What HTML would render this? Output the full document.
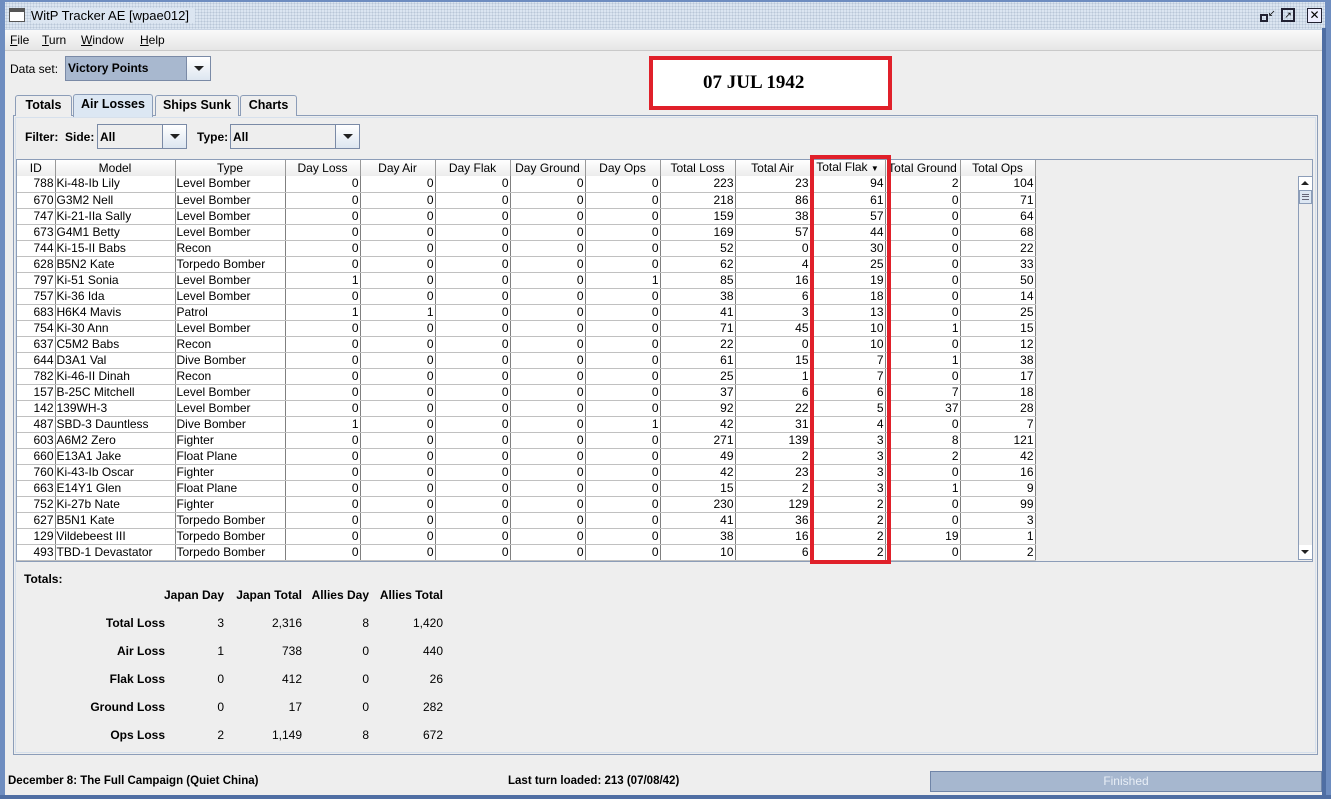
<!DOCTYPE html>
<html><head><meta charset="utf-8">
<style>
*{box-sizing:border-box;margin:0;padding:0}
body{width:1331px;height:799px;overflow:hidden;background:#6e8dc0;font-family:"Liberation Sans",sans-serif;font-size:12px;color:#000;position:relative}
.abs{position:absolute}
#win{left:5px;top:2px;width:1320px;height:795px;background:#eeeeee}
#title{left:0;top:0;width:1320px;height:28px;background:#dbe5f1;border-bottom:1px solid #c8d4e4;
background-image:radial-gradient(#b9c6d8 0.8px,transparent 0.9px);background-size:3px 3px}
#menu{left:0;top:28px;width:1320px;height:21px;background:linear-gradient(#fafafa,#e6e6e6);border-bottom:1px solid #c9c9c9}
.u{text-decoration:underline}
.cmb{border:1px solid #7a8aa6;background:#eeeeee;height:25px}
.arrbtn{position:absolute;right:0;top:0;width:24px;height:23px;border-left:1px solid #7a8aa6;background:linear-gradient(#fff,#dde6f0)}
.arrbtn:after{content:"";position:absolute;left:7px;top:9px;border-left:5px solid transparent;border-right:5px solid transparent;border-top:5px solid #222}
.tab{position:absolute;top:95px;height:21px;border:1px solid #8c9db8;border-bottom:none;border-radius:3px 3px 0 0;background:#eeeeee;font-weight:bold;font-size:12.5px;text-align:center;line-height:19px}
table{border-collapse:collapse;table-layout:fixed}
#tbl td{height:16px;border-right:1px solid #808080;border-bottom:1px solid #c0c0c0;padding:0 1px;white-space:nowrap;overflow:hidden;line-height:15px;background:#fff}
#tbl td.r{text-align:right}
#hdr td{height:16px;border-right:1px solid #999;border-bottom:1px solid #999;text-align:center;background:linear-gradient(#fff,#ececec);line-height:15px;white-space:nowrap;overflow:hidden}
.tl{position:absolute;font-weight:bold;text-align:right}
</style></head><body>
<div id="win" class="abs">
 <div id="title" class="abs">
  <div class="abs" style="left:4px;top:6px;width:16px;height:14px;border:1px solid #555;background:#fff"><div style="height:3px;background:#555"></div></div>
  <div class="abs" style="left:26px;top:6px;font-size:13px;background:#dbe5f1;padding-right:6px">WitP Tracker AE [wpae012]</div>
  <div class="abs" style="left:1255px;top:7px;width:14px;height:14px;"><div class="abs" style="left:0;top:5px;width:8px;height:8px;border:2px solid #223"></div><div class="abs" style="left:8px;top:0;font-size:9px;line-height:8px">↙</div></div>
  <div class="abs" style="left:1276px;top:6px;width:14px;height:14px;border:2px solid #223;font-size:9px;line-height:10px;text-align:center">↗</div>
  <div class="abs" style="left:1302px;top:6px;width:15px;height:15px;border:1px solid #223;background:#eef;font-size:12px;line-height:13px;text-align:center">✕</div>
 </div>
 <div id="menu" class="abs">
  <span class="abs" style="left:5px;top:3px"><span class="u">F</span>ile</span>
  <span class="abs" style="left:37px;top:3px"><span class="u">T</span>urn</span>
  <span class="abs" style="left:76px;top:3px"><span class="u">W</span>indow</span>
  <span class="abs" style="left:135px;top:3px"><span class="u">H</span>elp</span>
 </div>
</div>
<div class="abs" style="left:1322px;top:28px;width:4px;height:770px;background:#4f6ea3"></div>
<div class="abs" style="left:10px;top:62px">Data set:</div>
<div class="abs cmb" style="left:65px;top:56px;width:146px;">
 <div class="abs" style="left:0;top:0;width:120px;height:23px;background:#a8b8cf;padding:4px 2px;font-weight:bold">Victory Points</div>
 <div class="arrbtn"></div>
</div>
<div class="abs" style="left:649px;top:56px;width:243px;height:54px;border:4px solid #e0202a;background:#fff;font-family:'Liberation Serif',serif;font-weight:bold;font-size:19px;padding:12px 0 0 50px">07 JUL 1942</div>

<div class="abs" style="left:13px;top:115px;width:1305px;height:640px;border:1px solid #8c9db8;background:#eeeeee"></div>
<div class="abs" style="left:15px;top:117px;width:1301px;height:636px;border:1px solid #d6e0ec"></div>
<div class="tab" style="left:15px;width:57px">Totals</div>
<div class="tab" style="left:73px;width:80px;background:#dce7f3;top:94px;height:23px">Air Losses</div>
<div class="tab" style="left:155px;width:84px">Ships Sunk</div>
<div class="tab" style="left:240px;width:57px">Charts</div>

<div class="abs" style="left:25px;top:130px;font-weight:bold">Filter:&nbsp;&nbsp;Side:</div>
<div class="abs cmb" style="left:97px;top:124px;width:90px"><div style="padding:5px 2px;font-weight:bold">All</div><div class="arrbtn"></div></div>
<div class="abs" style="left:197px;top:130px;font-weight:bold">Type:</div>
<div class="abs cmb" style="left:230px;top:124px;width:130px"><div style="padding:5px 2px;font-weight:bold">All</div><div class="arrbtn"></div></div>

<div class="abs" style="left:16px;top:159px;width:1297px;height:403px;border:1px solid #8c9db8;background:#eeeeee"></div>
<table id="hdr" class="abs" style="left:17px;top:160px;width:1018px">
<colgroup><col style="width:38px"><col style="width:120px"><col style="width:110px"><col style="width:75px"><col style="width:75px"><col style="width:75px"><col style="width:75px"><col style="width:75px"><col style="width:75px"><col style="width:75px"><col style="width:75px"><col style="width:75px"><col style="width:75px"></colgroup>
<tr><td>ID</td><td>Model</td><td>Type</td><td>Day Loss</td><td>Day Air</td><td>Day Flak</td><td>Day Ground</td><td>Day Ops</td><td>Total Loss</td><td>Total Air</td><td>Total Flak <span style="font-size:8px">▼</span></td><td>Total Ground</td><td>Total Ops</td></tr>
</table>
<table id="tbl" class="abs" style="left:17px;top:176px;width:1018px">
<colgroup><col style="width:38px"><col style="width:120px"><col style="width:110px"><col style="width:75px"><col style="width:75px"><col style="width:75px"><col style="width:75px"><col style="width:75px"><col style="width:75px"><col style="width:75px"><col style="width:75px"><col style="width:75px"><col style="width:75px"></colgroup>
<tr><td class="r">788</td><td>Ki-48-Ib Lily</td><td>Level Bomber</td><td class="r">0</td><td class="r">0</td><td class="r">0</td><td class="r">0</td><td class="r">0</td><td class="r">223</td><td class="r">23</td><td class="r">94</td><td class="r">2</td><td class="r">104</td></tr>
<tr><td class="r">670</td><td>G3M2 Nell</td><td>Level Bomber</td><td class="r">0</td><td class="r">0</td><td class="r">0</td><td class="r">0</td><td class="r">0</td><td class="r">218</td><td class="r">86</td><td class="r">61</td><td class="r">0</td><td class="r">71</td></tr>
<tr><td class="r">747</td><td>Ki-21-IIa Sally</td><td>Level Bomber</td><td class="r">0</td><td class="r">0</td><td class="r">0</td><td class="r">0</td><td class="r">0</td><td class="r">159</td><td class="r">38</td><td class="r">57</td><td class="r">0</td><td class="r">64</td></tr>
<tr><td class="r">673</td><td>G4M1 Betty</td><td>Level Bomber</td><td class="r">0</td><td class="r">0</td><td class="r">0</td><td class="r">0</td><td class="r">0</td><td class="r">169</td><td class="r">57</td><td class="r">44</td><td class="r">0</td><td class="r">68</td></tr>
<tr><td class="r">744</td><td>Ki-15-II Babs</td><td>Recon</td><td class="r">0</td><td class="r">0</td><td class="r">0</td><td class="r">0</td><td class="r">0</td><td class="r">52</td><td class="r">0</td><td class="r">30</td><td class="r">0</td><td class="r">22</td></tr>
<tr><td class="r">628</td><td>B5N2 Kate</td><td>Torpedo Bomber</td><td class="r">0</td><td class="r">0</td><td class="r">0</td><td class="r">0</td><td class="r">0</td><td class="r">62</td><td class="r">4</td><td class="r">25</td><td class="r">0</td><td class="r">33</td></tr>
<tr><td class="r">797</td><td>Ki-51 Sonia</td><td>Level Bomber</td><td class="r">1</td><td class="r">0</td><td class="r">0</td><td class="r">0</td><td class="r">1</td><td class="r">85</td><td class="r">16</td><td class="r">19</td><td class="r">0</td><td class="r">50</td></tr>
<tr><td class="r">757</td><td>Ki-36 Ida</td><td>Level Bomber</td><td class="r">0</td><td class="r">0</td><td class="r">0</td><td class="r">0</td><td class="r">0</td><td class="r">38</td><td class="r">6</td><td class="r">18</td><td class="r">0</td><td class="r">14</td></tr>
<tr><td class="r">683</td><td>H6K4 Mavis</td><td>Patrol</td><td class="r">1</td><td class="r">1</td><td class="r">0</td><td class="r">0</td><td class="r">0</td><td class="r">41</td><td class="r">3</td><td class="r">13</td><td class="r">0</td><td class="r">25</td></tr>
<tr><td class="r">754</td><td>Ki-30 Ann</td><td>Level Bomber</td><td class="r">0</td><td class="r">0</td><td class="r">0</td><td class="r">0</td><td class="r">0</td><td class="r">71</td><td class="r">45</td><td class="r">10</td><td class="r">1</td><td class="r">15</td></tr>
<tr><td class="r">637</td><td>C5M2 Babs</td><td>Recon</td><td class="r">0</td><td class="r">0</td><td class="r">0</td><td class="r">0</td><td class="r">0</td><td class="r">22</td><td class="r">0</td><td class="r">10</td><td class="r">0</td><td class="r">12</td></tr>
<tr><td class="r">644</td><td>D3A1 Val</td><td>Dive Bomber</td><td class="r">0</td><td class="r">0</td><td class="r">0</td><td class="r">0</td><td class="r">0</td><td class="r">61</td><td class="r">15</td><td class="r">7</td><td class="r">1</td><td class="r">38</td></tr>
<tr><td class="r">782</td><td>Ki-46-II Dinah</td><td>Recon</td><td class="r">0</td><td class="r">0</td><td class="r">0</td><td class="r">0</td><td class="r">0</td><td class="r">25</td><td class="r">1</td><td class="r">7</td><td class="r">0</td><td class="r">17</td></tr>
<tr><td class="r">157</td><td>B-25C Mitchell</td><td>Level Bomber</td><td class="r">0</td><td class="r">0</td><td class="r">0</td><td class="r">0</td><td class="r">0</td><td class="r">37</td><td class="r">6</td><td class="r">6</td><td class="r">7</td><td class="r">18</td></tr>
<tr><td class="r">142</td><td>139WH-3</td><td>Level Bomber</td><td class="r">0</td><td class="r">0</td><td class="r">0</td><td class="r">0</td><td class="r">0</td><td class="r">92</td><td class="r">22</td><td class="r">5</td><td class="r">37</td><td class="r">28</td></tr>
<tr><td class="r">487</td><td>SBD-3 Dauntless</td><td>Dive Bomber</td><td class="r">1</td><td class="r">0</td><td class="r">0</td><td class="r">0</td><td class="r">1</td><td class="r">42</td><td class="r">31</td><td class="r">4</td><td class="r">0</td><td class="r">7</td></tr>
<tr><td class="r">603</td><td>A6M2 Zero</td><td>Fighter</td><td class="r">0</td><td class="r">0</td><td class="r">0</td><td class="r">0</td><td class="r">0</td><td class="r">271</td><td class="r">139</td><td class="r">3</td><td class="r">8</td><td class="r">121</td></tr>
<tr><td class="r">660</td><td>E13A1 Jake</td><td>Float Plane</td><td class="r">0</td><td class="r">0</td><td class="r">0</td><td class="r">0</td><td class="r">0</td><td class="r">49</td><td class="r">2</td><td class="r">3</td><td class="r">2</td><td class="r">42</td></tr>
<tr><td class="r">760</td><td>Ki-43-Ib Oscar</td><td>Fighter</td><td class="r">0</td><td class="r">0</td><td class="r">0</td><td class="r">0</td><td class="r">0</td><td class="r">42</td><td class="r">23</td><td class="r">3</td><td class="r">0</td><td class="r">16</td></tr>
<tr><td class="r">663</td><td>E14Y1 Glen</td><td>Float Plane</td><td class="r">0</td><td class="r">0</td><td class="r">0</td><td class="r">0</td><td class="r">0</td><td class="r">15</td><td class="r">2</td><td class="r">3</td><td class="r">1</td><td class="r">9</td></tr>
<tr><td class="r">752</td><td>Ki-27b Nate</td><td>Fighter</td><td class="r">0</td><td class="r">0</td><td class="r">0</td><td class="r">0</td><td class="r">0</td><td class="r">230</td><td class="r">129</td><td class="r">2</td><td class="r">0</td><td class="r">99</td></tr>
<tr><td class="r">627</td><td>B5N1 Kate</td><td>Torpedo Bomber</td><td class="r">0</td><td class="r">0</td><td class="r">0</td><td class="r">0</td><td class="r">0</td><td class="r">41</td><td class="r">36</td><td class="r">2</td><td class="r">0</td><td class="r">3</td></tr>
<tr><td class="r">129</td><td>Vildebeest III</td><td>Torpedo Bomber</td><td class="r">0</td><td class="r">0</td><td class="r">0</td><td class="r">0</td><td class="r">0</td><td class="r">38</td><td class="r">16</td><td class="r">2</td><td class="r">19</td><td class="r">1</td></tr>
<tr><td class="r">493</td><td>TBD-1 Devastator</td><td>Torpedo Bomber</td><td class="r">0</td><td class="r">0</td><td class="r">0</td><td class="r">0</td><td class="r">0</td><td class="r">10</td><td class="r">6</td><td class="r">2</td><td class="r">0</td><td class="r">2</td></tr>
</table>
<!-- scrollbar -->
<div class="abs" style="left:1298px;top:176px;width:15px;height:384px;border:1px solid #8c9db8;background:#eeeeee"></div>
<div class="abs" style="left:1299px;top:177px;width:13px;height:13px;background:#fff"><div class="abs" style="left:2px;top:4px;border-left:4px solid transparent;border-right:4px solid transparent;border-bottom:4px solid #222"></div></div>
<div class="abs" style="left:1299px;top:190px;width:13px;height:14px;border:1px solid #8c9db8;background:#dde7f3"><div class="abs" style="left:2px;top:3px;width:7px;height:6px;border-top:1px solid #667;border-bottom:1px solid #667"></div><div class="abs" style="left:2px;top:5px;width:7px;height:1px;background:#667"></div></div>
<div class="abs" style="left:1299px;top:545px;width:13px;height:14px;background:#fff"><div class="abs" style="left:2px;top:5px;border-left:4px solid transparent;border-right:4px solid transparent;border-top:4px solid #222"></div></div>

<div class="abs" style="left:810px;top:155px;width:81px;height:409px;border:4px solid #e0202a"></div>

<div class="abs" style="left:24px;top:572px;font-weight:bold">Totals:</div>
<div class="tl" style="left:120px;top:588px;width:104px">Japan Day</div>
<div class="tl" style="left:220px;top:588px;width:82px">Japan Total</div>
<div class="tl" style="left:290px;top:588px;width:79px">Allies Day</div>
<div class="tl" style="left:360px;top:588px;width:83px">Allies Total</div>

<div class="tl" style="left:40px;top:616px;width:125px">Total Loss</div>
<div class="abs" style="left:160px;top:616px;width:64px;text-align:right">3</div>
<div class="abs" style="left:220px;top:616px;width:82px;text-align:right">2,316</div>
<div class="abs" style="left:300px;top:616px;width:69px;text-align:right">8</div>
<div class="abs" style="left:370px;top:616px;width:73px;text-align:right">1,420</div>

<div class="tl" style="left:40px;top:644px;width:125px">Air Loss</div>
<div class="abs" style="left:160px;top:644px;width:64px;text-align:right">1</div>
<div class="abs" style="left:220px;top:644px;width:82px;text-align:right">738</div>
<div class="abs" style="left:300px;top:644px;width:69px;text-align:right">0</div>
<div class="abs" style="left:370px;top:644px;width:73px;text-align:right">440</div>

<div class="tl" style="left:40px;top:672px;width:125px">Flak Loss</div>
<div class="abs" style="left:160px;top:672px;width:64px;text-align:right">0</div>
<div class="abs" style="left:220px;top:672px;width:82px;text-align:right">412</div>
<div class="abs" style="left:300px;top:672px;width:69px;text-align:right">0</div>
<div class="abs" style="left:370px;top:672px;width:73px;text-align:right">26</div>

<div class="tl" style="left:40px;top:700px;width:125px">Ground Loss</div>
<div class="abs" style="left:160px;top:700px;width:64px;text-align:right">0</div>
<div class="abs" style="left:220px;top:700px;width:82px;text-align:right">17</div>
<div class="abs" style="left:300px;top:700px;width:69px;text-align:right">0</div>
<div class="abs" style="left:370px;top:700px;width:73px;text-align:right">282</div>

<div class="tl" style="left:40px;top:728px;width:125px">Ops Loss</div>
<div class="abs" style="left:160px;top:728px;width:64px;text-align:right">2</div>
<div class="abs" style="left:220px;top:728px;width:82px;text-align:right">1,149</div>
<div class="abs" style="left:300px;top:728px;width:69px;text-align:right">8</div>
<div class="abs" style="left:370px;top:728px;width:73px;text-align:right">672</div>

<div class="abs" style="left:8px;top:775px;font-weight:bold;font-size:11.5px">December 8: The Full Campaign (Quiet China)</div>
<div class="abs" style="left:508px;top:775px;font-weight:bold;font-size:11.5px">Last turn loaded: 213 (07/08/42)</div>
<div class="abs" style="left:930px;top:771px;width:392px;height:21px;border:1px solid #7085a8;background:#a6b7cf;color:#e8eef6;text-align:center;line-height:19px">Finished</div>
<div class="abs" style="left:0;top:795px;width:1331px;height:4px;background:#4f6ea3"></div>
</body></html>
